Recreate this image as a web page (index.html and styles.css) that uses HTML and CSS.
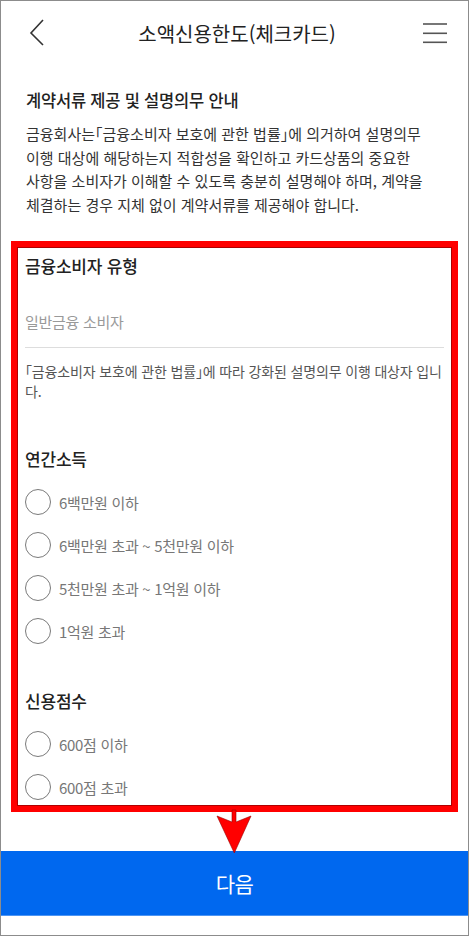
FILE: index.html
```html
<!DOCTYPE html>
<html lang="ko">
<head>
<meta charset="utf-8">
<title>소액신용한도(체크카드)</title>
<link rel="stylesheet" href="styles.css">
</head>
<body>
<div class="frame">
  <header class="topbar">
    <button class="icon-btn back" aria-label="뒤로">
      <svg width="24" height="40" viewBox="0 0 24 40"><polyline points="17,10 5,23 17,35" fill="none" stroke="#333" stroke-width="1.6"/></svg>
    </button>
    <h1 class="title">소액신용한도(체크카드)</h1>
    <button class="icon-btn menu" aria-label="메뉴">
      <svg width="26" height="30" viewBox="0 0 26 30"><g stroke="#555" stroke-width="1.6"><line x1="1" y1="5" x2="25" y2="5"/><line x1="1" y1="14.3" x2="25" y2="14.3"/><line x1="1" y1="23.3" x2="25" y2="23.3"/></g></svg>
    </button>
  </header>

  <section class="intro">
    <h2 class="intro-title">계약서류 제공 및 설명의무 안내</h2>
    <p class="intro-text">금융회사는「금융소비자 보호에 관한 법률」에 의거하여 설명의무<br>이행 대상에 해당하는지 적합성을 확인하고 카드상품의 중요한<br>사항을 소비자가 이해할 수 있도록 충분히 설명해야 하며, 계약을<br>체결하는 경우 지체 없이 계약서류를 제공해야 합니다.</p>
  </section>

  <section class="card">
    <h3 class="card-title">금융소비자 유형</h3>
    <div class="field">일반금융 소비자</div>
    <p class="note">「금융소비자 보호에 관한 법률」에 따라 강화된 설명의무 이행 대상자 입니다.</p>

    <h3 class="card-title group-title">연간소득</h3>
    <ul class="options">
      <li class="option"><span class="radio"></span>6백만원 이하</li>
      <li class="option"><span class="radio"></span>6백만원 초과 ~ 5천만원 이하</li>
      <li class="option"><span class="radio"></span>5천만원 초과 ~ 1억원 이하</li>
      <li class="option"><span class="radio"></span>1억원 초과</li>
    </ul>

    <h3 class="card-title group-title second">신용점수</h3>
    <ul class="options">
      <li class="option"><span class="radio"></span>600점 이하</li>
      <li class="option"><span class="radio"></span>600점 초과</li>
    </ul>
  </section>

  <svg class="arrow" width="70" height="60" viewBox="200 800 70 60">
    <polygon points="232,810 236,810 236,822 251,816 234.3,853 217,816 232,822" fill="#ff0000" stroke="#900" stroke-width="0.6" stroke-linejoin="miter"/>
  </svg>

  <button class="next">다음</button>
</div>
</body>
</html>
```

FILE: styles.css
```css
* { box-sizing: border-box; }
html, body { margin: 0; padding: 0; background: #fff; }
body {
  font-family: "Noto Sans CJK KR", "Noto Sans", sans-serif;
  color: #222;
}
.frame {
  position: relative;
  width: 469px;
  height: 936px;
  border: 1px solid #8c8c8c;
  display: flex;
  flex-direction: column;
  overflow: hidden;
}
.topbar {
  height: 67px;
  display: grid;
  grid-template-columns: 1fr auto 1fr;
  align-items: start;
  padding: 0 20px 0 25px;
  flex: none;
}
.icon-btn {
  background: none;
  border: 0;
  padding: 0;
  display: flex;
  cursor: pointer;
}
.back { justify-self: start; margin-top: 9px; }
.menu { justify-self: end; margin-top: 18px; }
.title {
  margin: 19px 0 0 0;
  font-size: 20px;
  font-weight: 400;
  letter-spacing: 0;
  color: #222;
  line-height: 28px;
}
.intro {
  padding: 20px 10px 0 25px;
}
.intro-title {
  margin: 0;
  font-size: 16.5px;
  font-weight: 500;
  letter-spacing: -0.2px;
  line-height: 24px;
  color: #222;
}
.intro-text {
  margin: 10px 0 0 0;
  font-size: 15px;
  line-height: 23.5px;
  letter-spacing: 0;
  color: #333;
  white-space: nowrap;
  font-feature-settings: "halt";
}
.card {
  margin: 25px 10px 0 10px;
  border: 6px solid #ff0000;
  box-shadow: inset 0 0 0 1px #b00000;
  padding: 7px 8px 7px 8px;
  height: 571px;
  flex: none;
}
.card-title {
  margin: 0;
  font-size: 17px;
  font-weight: 500;
  letter-spacing: -0.2px;
  line-height: 24px;
  color: #222;
}
.field {
  margin-top: 33px;
  font-size: 15px;
  line-height: 22px;
  letter-spacing: -0.3px;
  color: #999;
  padding-bottom: 14px;
  border-bottom: 1px solid #ddd;
}
.note {
  margin: 13px 0 0 0;
  font-size: 14px;
  line-height: 20px;
  letter-spacing: -0.15px;
  color: #555;
  font-feature-settings: "halt";
}
.group-title { margin-top: 46px; }
.group-title.second { margin-top: 45px; }
.options {
  list-style: none;
  margin: 18px 0 0 0;
  padding: 0;
  display: flex;
  flex-direction: column;
  gap: 17px;
}
.option {
  display: flex;
  align-items: center;
  gap: 8px;
  height: 26px;
  font-size: 15px;
  letter-spacing: -0.3px;
  color: #777;
}
.radio {
  width: 26px;
  height: 26px;
  border: 1.5px solid #7a7a7a;
  border-radius: 50%;
  flex: none;
}
.arrow {
  position: absolute;
  left: 199px;
  top: 799px;
}
.next {
  margin-top: auto;
  margin-bottom: 20px;
  height: 64px;
  border: 0;
  background: #0068ef;
  box-shadow: 0 1px 0 #4d95f3;
  color: #fff;
  font-family: inherit;
  font-size: 21px;
  letter-spacing: -0.5px;
  line-height: 60px;
  flex: none;
}
```
